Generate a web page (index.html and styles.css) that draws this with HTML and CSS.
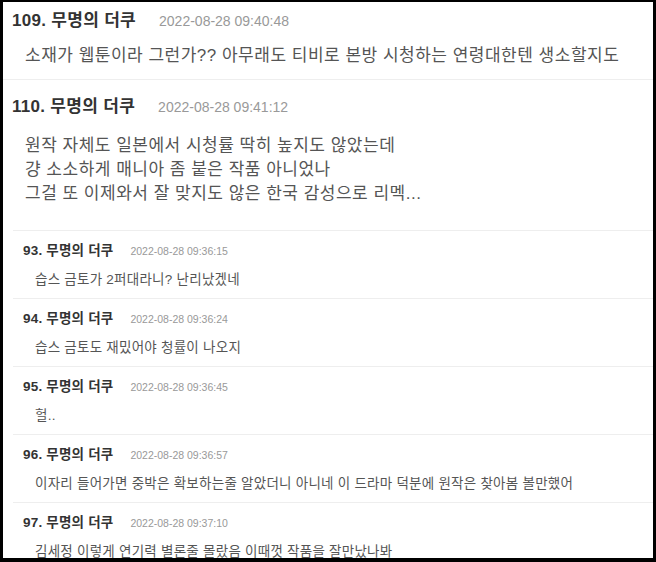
FILE: index.html
```html
<!DOCTYPE html>
<html lang="ko">
<head>
  <meta charset="UTF-8">
  <meta name="viewport" content="width=device-width, initial-scale=1">
  <title>댓글</title>
  <link rel="stylesheet" href="styles.css">
</head>
<body>
  <div class="frame">
    <div class="post cut">
      <div class="head"><b>109. 무명의 더쿠</b><span class="date">2022-08-28 09:40:48</span></div>
      <p class="text">소재가 웹툰이라 그런가?? 아무래도 티비로 본방 시청하는 연령대한텐 생소할지도</p>
    </div>
    <div class="post last">
      <div class="head"><b>110. 무명의 더쿠</b><span class="date">2022-08-28 09:41:12</span></div>
      <p class="text">원작 자체도 일본에서 시청률 딱히 높지도 않았는데<br>걍 소소하게 매니아 좀 붙은 작품 아니었나<br>그걸 또 이제와서 잘 맞지도 않은 한국 감성으로 리멕...</p>
    </div>

    <ul class="replies">
      <li class="reply">
        <div class="head"><b>93. 무명의 더쿠</b><span class="date">2022-08-28 09:36:15</span></div>
        <p class="text">습스 금토가 2퍼대라니? 난리났겠네</p>
      </li>
      <li class="reply">
        <div class="head"><b>94. 무명의 더쿠</b><span class="date">2022-08-28 09:36:24</span></div>
        <p class="text">습스 금토도 재밌어야 청률이 나오지</p>
      </li>
      <li class="reply">
        <div class="head"><b>95. 무명의 더쿠</b><span class="date">2022-08-28 09:36:45</span></div>
        <p class="text">헐..</p>
      </li>
      <li class="reply">
        <div class="head"><b>96. 무명의 더쿠</b><span class="date">2022-08-28 09:36:57</span></div>
        <p class="text">이자리 들어가면 중박은 확보하는줄 알았더니 아니네 이 드라마 덕분에 원작은 찾아봄 볼만했어</p>
      </li>
      <li class="reply">
        <div class="head"><b>97. 무명의 더쿠</b><span class="date">2022-08-28 09:37:10</span></div>
        <p class="text">김세정 이렇게 연기력 별론줄 몰랐음 이때껏 작품을 잘만났나봐</p>
      </li>
    </ul>
  </div>
</body>
</html>
```

FILE: styles.css
```css
*{
  padding: 0;
  margin: 0;
  box-sizing: border-box;
}
body{
  background: #000;
  font-family: "Liberation Sans", "Noto Sans CJK KR", sans-serif;
  color: #555;
}
.frame{
  width: 656px;
  height: 562px;
  overflow: hidden;
  background: #fff;
  border-style: solid;
  border-color: #000;
  border-width: 2px 3px 4px 3px;
}

/* big comments */
.post{
  padding: 15px 0 11px 9px;
  border-bottom: 1px solid #eee;
}
.post.cut{
  padding-top: 7px;
}
.post.cut .text{
  margin-top: 11px;
}
.post.last{
  border-bottom: none;
  padding-bottom: 24px;
}
.post .head{
  line-height: 24px;
  font-size: 17px;
  letter-spacing: 0.3px;
  color: #333;
}
.post .date{
  font-size: 14px;
  letter-spacing: 0;
  color: #999;
  margin-left: 23px;
}
.post .text{
  margin-top: 15px;
  padding-left: 13px;
  font-size: 17px;
  letter-spacing: 0.5px;
  line-height: 24px;
}

/* replies */
.replies{
  list-style: none;
  margin-left: 10px;
}
.reply{
  border-top: 1px solid #eee;
  padding: 10px 0 8px 10px;
}
.reply .head{
  font-size: 13.5px;
  letter-spacing: 0.2px;
  line-height: 20px;
  color: #333;
}
.reply .date{
  font-size: 10.5px;
  letter-spacing: 0;
  color: #999;
  margin-left: 17px;
}
.reply .text{
  margin-top: 9px;
  padding-left: 12px;
  font-size: 13.5px;
  letter-spacing: 0.25px;
  line-height: 20px;
}
```
